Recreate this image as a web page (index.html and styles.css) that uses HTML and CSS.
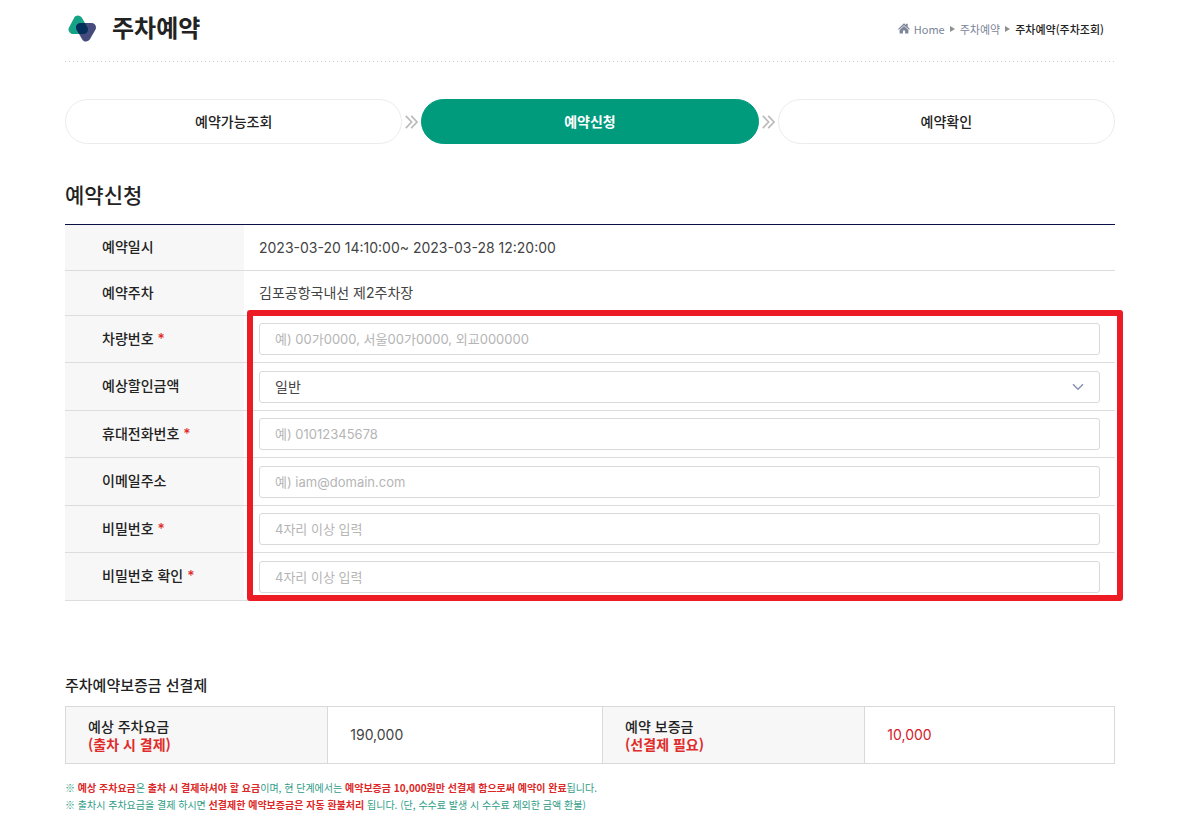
FILE: index.html
```html
<!DOCTYPE html>
<html lang="ko">
<head>
<meta charset="utf-8">
<meta name="viewport" content="width=device-width, initial-scale=1">
<title>주차예약</title>
<link rel="stylesheet" href="styles.css">
</head>
<body>
<div class="page">
  <header class="header">
    <div class="brand">
      <svg class="logo" width="29" height="28" viewBox="0 0 29 28" aria-hidden="true">
        <defs>
          <mask id="overlap" maskUnits="userSpaceOnUse" x="0" y="0" width="29" height="28">
            <path d="M10 5 5 14.5H15.5Z" fill="#fff" stroke="#fff" stroke-width="9" stroke-linejoin="round"/>
          </mask>
        </defs>
        <path d="M10 5 5 14.5H15.5Z" fill="#16a286" stroke="#16a286" stroke-width="9" stroke-linejoin="round"/>
        <path d="M12.5 12.5H23.5L18 22Z" fill="#454b7c" stroke="#454b7c" stroke-width="9" stroke-linejoin="round"/>
        <path d="M12.5 12.5H23.5L18 22Z" fill="#02305a" stroke="#02305a" stroke-width="9" stroke-linejoin="round" mask="url(#overlap)"/>
      </svg>
      <h1 class="title">주차예약</h1>
    </div>
    <nav class="crumbs" aria-label="현재 위치">
      <a class="crumb" href="#">
        <svg width="12" height="11" viewBox="0 0 12 11" aria-hidden="true"><path d="M6 .3 7.9 2V.8h1.8v2.9L11.9 5.9l-.8.9L6 2.3.9 6.8.1 5.9ZM6 3l4.4 3.9v3.7H7.1V7.4H4.9v3.2H1.6V6.9Z" fill="#7b8499"/></svg>
        <span>Home</span>
      </a>
      <svg width="5" height="6" viewBox="0 0 5 6" aria-hidden="true"><path d="M0 0 5 3 0 6Z" fill="#8f8f8f"/></svg>
      <a class="crumb" href="#">주차예약</a>
      <svg width="5" height="6" viewBox="0 0 5 6" aria-hidden="true"><path d="M0 0 5 3 0 6Z" fill="#8f8f8f"/></svg>
      <a class="crumb crumb-current" href="#" aria-current="page">주차예약(주차조회)</a>
    </nav>
  </header>

  <main>
    <ol class="steps">
      <li class="step">예약가능조회</li>
      <li class="chevron" aria-hidden="true"><svg width="13" height="14" viewBox="0 0 13 14"><path d="M.8.8 6.6 7 .8 13.2M6.2.8 12 7l-5.8 6.2" fill="none" stroke="#bbb" stroke-width="1.7"/></svg></li>
      <li class="step step-active" aria-current="step">예약신청</li>
      <li class="chevron" aria-hidden="true"><svg width="13" height="14" viewBox="0 0 13 14"><path d="M.8.8 6.6 7 .8 13.2M6.2.8 12 7l-5.8 6.2" fill="none" stroke="#bbb" stroke-width="1.7"/></svg></li>
      <li class="step">예약확인</li>
    </ol>

    <h2 class="section-title">예약신청</h2>
    <form class="form">
      <table class="fields">
        <tbody>
          <tr class="row-date"><th scope="row">예약일시</th><td>2023-03-20 14:10:00~ 2023-03-28 12:20:00</td></tr>
          <tr class="row-lot"><th scope="row">예약주차</th><td>김포공항국내선 제2주차장</td></tr>
          <tr><th scope="row"><label for="car">차량번호 <span class="required">*</span></label></th><td><input class="control" id="car" type="text" placeholder="예) 00가0000, 서울00가0000, 외교000000"></td></tr>
          <tr><th scope="row"><label for="discount">예상할인금액</label></th><td>
            <div class="select">
              <select class="control" id="discount"><option>일반</option></select>
              <svg class="arrow" width="12" height="8" viewBox="0 0 12 8" aria-hidden="true"><path d="M1 1.2 6 6.2 11 1.2" fill="none" stroke="#8a90b0" stroke-width="1.5"/></svg>
            </div>
          </td></tr>
          <tr><th scope="row"><label for="phone">휴대전화번호 <span class="required">*</span></label></th><td><input class="control" id="phone" type="tel" placeholder="예) 01012345678"></td></tr>
          <tr><th scope="row"><label for="email">이메일주소</label></th><td><input class="control" id="email" type="email" placeholder="예) iam@domain.com"></td></tr>
          <tr><th scope="row"><label for="pw">비밀번호 <span class="required">*</span></label></th><td><input class="control" id="pw" type="password" placeholder="4자리 이상 입력"></td></tr>
          <tr><th scope="row"><label for="pw2">비밀번호 확인 <span class="required">*</span></label></th><td><input class="control" id="pw2" type="password" placeholder="4자리 이상 입력"></td></tr>
        </tbody>
      </table>
      <div class="highlight"></div>
    </form>

    <h3 class="sub-title">주차예약보증금 선결제</h3>
    <table class="fees">
      <tbody>
        <tr>
          <th scope="row">예상 주차요금<br><strong class="red">(출차 시 결제)</strong></th>
          <td>190,000</td>
          <th scope="row">예약 보증금<br><strong class="red">(선결제 필요)</strong></th>
          <td class="amount-due">10,000</td>
        </tr>
      </tbody>
    </table>
    <div class="notes">
      <p>※ <strong>예상 주차요금</strong>은 <strong>출차 시 결제하셔야 할 요금</strong>이며, 현 단계에서는 <strong>예약보증금 10,000원만 선결제 함으로써 예약이 완료</strong>됩니다.</p>
      <p>※ 출차시 주차요금을 결제 하시면 <strong>선결제한 예약보증금은 자동 환불처리</strong> 됩니다. (단, 수수료 발생 시 수수료 제외한 금액 환불)</p>
    </div>
  </main>
</div>
</body>
</html>
```
FILE: styles.css
```css
* { box-sizing: border-box; }

body {
  margin: 0;
  background: #fff;
  color: #222;
  font-family: "Noto Sans CJK KR", "Noto Sans", sans-serif;
  font-size: 14px;
  line-height: 20px;
}

h1, h2, h3, p, ol { margin: 0; padding: 0; }

.page { padding: 0 66px 0 65px; }

.header {
  display: flex;
  align-items: center;
  justify-content: space-between;
  height: 62px;
  padding: 0 11px 5px 3px;
  background: repeating-linear-gradient(90deg, #ccc 0 1px, transparent 1px 4px) left bottom / 100% 1px no-repeat;
}

.brand { display: flex; align-items: center; gap: 15px; }
.title { padding-bottom: 4px; font-size: 24px; line-height: 32px; font-weight: 700; }

.crumbs { display: flex; align-items: center; gap: 5px; font-size: 11px; line-height: 16px; }
.crumb { display: flex; align-items: center; gap: 4px; color: #7b8499; text-decoration: none; }
.crumb-current { color: #222; font-weight: 500; }

.steps {
  display: grid;
  grid-template-columns: 1fr 19px 1fr 19px 1fr;
  align-items: center;
  margin-top: 37px;
  list-style: none;
}
.step {
  height: 45px;
  border: 1px solid #ececec;
  border-radius: 23px;
  line-height: 42px;
  text-align: center;
  font-weight: 500;
}
.step-active { background: #009b7d; border-color: #009b7d; color: #fff; font-weight: 700; }
.chevron { display: flex; justify-content: center; }

.section-title { margin-top: 35px; font-size: 21px; line-height: 30px; font-weight: 500; }

.form { position: relative; margin-top: 15px; }
.fields { width: 100%; border-spacing: 0; border-top: 1px solid #0a1045; table-layout: fixed; }
.fields tr:nth-child(odd) { height: 47px; }
.fields tr:nth-child(even) { height: 48px; }
.fields tr.row-date:nth-child(odd) { height: 46px; }
.fields tr.row-lot:nth-child(even) { height: 45px; }
.fields th, .fields td { padding: 0 15px; border-bottom: 1px solid #ddd; text-align: left; }
.fields th { width: 179px; padding: 0 0 3px 37px; background: #f7f7f7; font-weight: 500; }
.fields td { color: #444; font-family: Inter, "Noto Sans CJK KR", sans-serif; }
.required { color: #e02b2b; font-family: Inter, sans-serif; font-size: 14px; line-height: 16px; }

.control {
  display: block;
  width: 100%;
  height: 32px;
  padding: 0 15px;
  border: 1px solid #d9d9d9;
  border-radius: 3px;
  background: #fff;
  color: #444;
  font: 13px/20px Inter, "Noto Sans CJK KR", sans-serif;
  appearance: none;
}
.control::placeholder { color: #b5b5b5; opacity: 1; }
.select { position: relative; }
.select .control { font-size: 14px; }
.arrow { position: absolute; top: 12px; right: 16px; pointer-events: none; }

.highlight {
  position: absolute;
  top: 86px;
  right: -8px;
  bottom: 0;
  left: 182px;
  border: 6px solid #ed1c24;
  border-radius: 3px;
  pointer-events: none;
}

.sub-title { margin-top: 73px; font-size: 15px; line-height: 22px; font-weight: 500; }

.fees { width: 100%; margin-top: 10px; border-collapse: collapse; table-layout: fixed; }
.fees th, .fees td { height: 57px; padding: 0 0 0 22px; border: 1px solid #d9d9d9; text-align: left; line-height: 18px; }
.fees th { width: 25%; background: #f7f7f7; font-weight: 500; }
.fees td { width: 26.2%; color: #444; font-family: Inter, "Noto Sans CJK KR", sans-serif; }
.fees td:last-child { width: 23.8%; }
.fees .amount-due { color: #d4202a; }
.red { color: #e02b2b; }

.notes { margin-top: 15px; color: #2f9c86; font-size: 10px; line-height: 17px; }
.notes strong { color: #dc2828; }
```
